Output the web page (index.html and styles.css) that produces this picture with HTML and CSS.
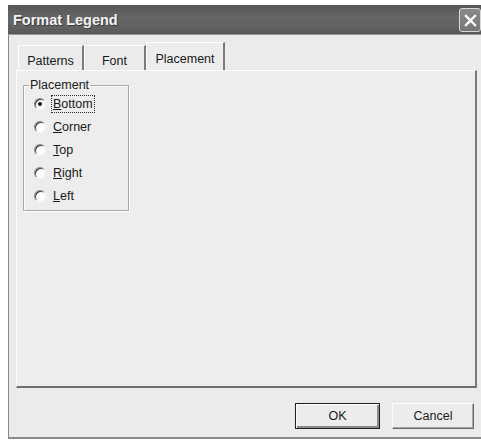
FILE: index.html
```html
<!DOCTYPE html>
<html>
<head>
<meta charset="utf-8">
<title>Format Legend</title>
<link rel="stylesheet" href="styles.css">
</head>
<body>
<div class="window">
  <div class="titlebar">
    <span class="title">Format Legend</span>
    <button class="close" aria-label="Close">
      <svg width="13" height="13" viewBox="0 0 13 13"><path d="M2 2 L11 11 M11 2 L2 11" stroke="#ffffff" stroke-width="2.4" stroke-linecap="square"/></svg>
    </button>
  </div>
  <div class="body">
    <div class="tabs">
      <div class="tab tab-patterns">Patterns</div>
      <div class="tab tab-font">Font</div>
      <div class="tab tab-active">Placement</div>
    </div>
    <div class="panel">
      <fieldset class="group">
        <legend class="group-title">Placement</legend>
        <label class="radio">
          <span class="radio-dot checked"></span>
          <span class="radio-label focus"><u>B</u>ottom</span>
        </label>
        <label class="radio">
          <span class="radio-dot"></span>
          <span class="radio-label"><u>C</u>orner</span>
        </label>
        <label class="radio">
          <span class="radio-dot"></span>
          <span class="radio-label"><u>T</u>op</span>
        </label>
        <label class="radio">
          <span class="radio-dot"></span>
          <span class="radio-label"><u>R</u>ight</span>
        </label>
        <label class="radio">
          <span class="radio-dot"></span>
          <span class="radio-label"><u>L</u>eft</span>
        </label>
      </fieldset>
    </div>
    <div class="buttons">
      <button class="btn btn-default">OK</button>
      <button class="btn btn-cancel">Cancel</button>
    </div>
  </div>
</div>
</body>
</html>
```

FILE: styles.css
```css
html, body {
  margin: 0;
  padding: 0;
  background: #ffffff;
}

body {
  font-family: "Liberation Sans", Arial, sans-serif;
  font-size: 12px;
  color: #1a1a1a;
}

.window {
  margin: 5px 0 0 8px;
  width: 473px;
  height: 434px;
  box-sizing: border-box;
  border-left: 1px solid #8a8a8a;
  border-bottom: 2px solid #8a8a8a;
  background: #ebebeb;
  display: flex;
  flex-direction: column;
}

.titlebar {
  height: 30px;
  box-sizing: border-box;
  background: linear-gradient(#555555, #676767 45%, #606060 80%, #575757);
  border-bottom: 1px solid #9a9a9a;
  display: flex;
  align-items: center;
  justify-content: space-between;
  padding: 0 0 0 5px;
  margin-left: -1px;
}

.title {
  font-family: "Liberation Sans", Arial, sans-serif;
  font-weight: bold;
  font-size: 14.5px;
  color: #f4f4f4;
  text-shadow: 1px 1px 0 #3a3a3a;
}

.close {
  width: 22px;
  height: 24px;
  margin-top: 1px;
  padding: 0;
  border: 1px solid #d8d8d8;
  border-radius: 3px;
  background: linear-gradient(#8a8a8a, #777777);
  display: flex;
  align-items: center;
  justify-content: center;
}

.body {
  flex: 1;
  display: flex;
  flex-direction: column;
  padding: 7px 4px 0 7px;
}

.tabs {
  display: flex;
  align-items: flex-end;
  height: 28px;
  padding-left: 2px;
}

.tab {
  height: 25px;
  box-sizing: border-box;
  border-top: 1px solid #ffffff;
  border-left: 1px solid #ffffff;
  border-right: 2px solid #7a7a7a;
  background: #ebebeb;
  display: flex;
  align-items: center;
  justify-content: center;
  font-size: 12.5px;
  color: #1a1a1a;
  padding-top: 6px;
}

.tab-patterns {
  width: 66px;
}

.tab-font {
  width: 62px;
}

.tab-active {
  width: 79px;
  height: 29px;
  margin-bottom: -1px;
  padding-top: 3px;
  padding-bottom: 0;
  background: #ededed;
}

.panel {
  height: 318px;
  box-sizing: border-box;
  border-top: 1px solid #ffffff;
  border-left: 1px solid #ffffff;
  border-right: 2px solid #7a7a7a;
  border-bottom: 2px solid #6e6e6e;
  background: #ededed;
  padding: 7px 0 0 6px;
}

.group {
  width: 106px;
  height: 133px;
  box-sizing: border-box;
  margin: 0;
  padding: 0 0 0 10px;
  border: 1px solid #a8a8a8;
  box-shadow: inset 1px 1px 0 #ffffff, 1px 1px 0 #ffffff;
}

.group-title {
  padding: 0 1px;
  margin-left: -5px;
  font-size: 12.5px;
  color: #1a1a1a;
}

.radio {
  display: flex;
  align-items: center;
  height: 23px;
  gap: 5px;
}

.radio-dot {
  width: 12px;
  height: 12px;
  border-radius: 50%;
  box-sizing: border-box;
  background: #ffffff;
  border: 1px solid;
  border-color: #8a8a8a #f4f4f4 #f4f4f4 #8a8a8a;
  box-shadow: inset 1px 1px 0 #3c3c3c;
  position: relative;
  flex: none;
}

.radio-dot.checked::after {
  content: "";
  position: absolute;
  left: 3px;
  top: 3px;
  width: 4px;
  height: 4px;
  border-radius: 50%;
  background: #111111;
}

.radio-label {
  font-size: 12.5px;
  padding: 1px 1px;
  border: 1px dotted transparent;
}

.radio-label.focus {
  border-color: #2a2a2a;
}

.buttons {
  display: flex;
  justify-content: flex-end;
  gap: 12px;
  padding: 15px 3px 0 0;
}

.btn {
  height: 26px;
  box-sizing: border-box;
  font-family: "Liberation Sans", Arial, sans-serif;
  font-size: 12.5px;
  color: #1a1a1a;
  background: #ececec;
  border: 1px solid;
  border-color: #ffffff #6a6a6a #6a6a6a #ffffff;
  box-shadow: inset -1px -1px 0 #a8a8a8;
  padding: 0;
}

.btn-default {
  width: 85px;
  border: 1px solid #1e1e1e;
  box-shadow: inset 1px 1px 0 #ffffff, inset -2px -2px 0 #8a8a8a;
}

.btn-cancel {
  width: 82px;
}
```
